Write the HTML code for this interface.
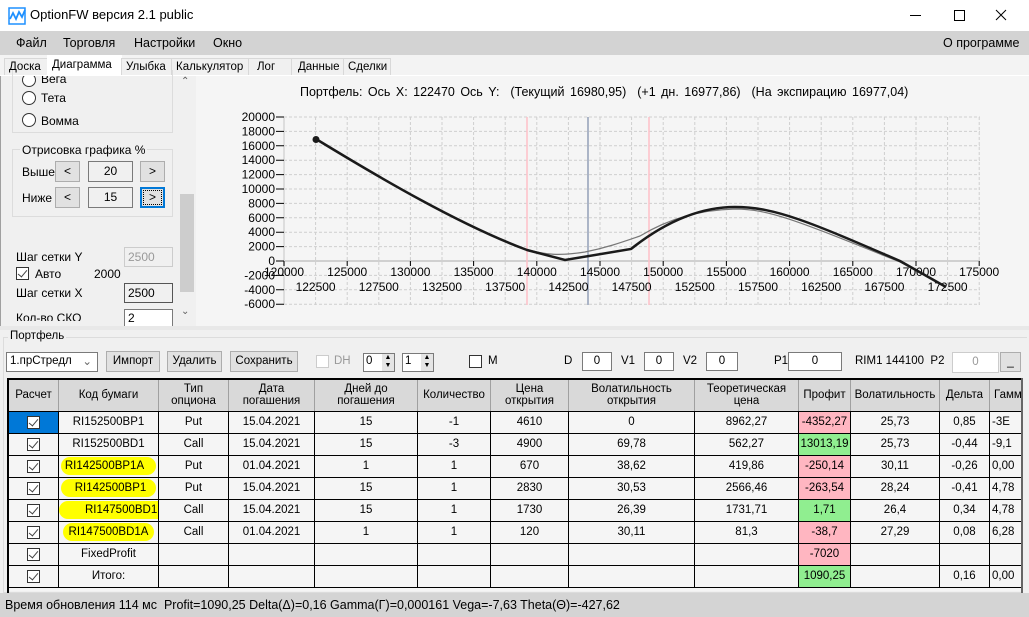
<!DOCTYPE html>
<html><head><meta charset="utf-8"><style>
*{box-sizing:border-box;margin:0;padding:0}
body{width:1029px;height:617px;overflow:hidden;position:relative;background:#f0f0f0;font-family:"Liberation Sans",sans-serif;font-size:12px;color:#000}
.a{position:absolute}
.tab{position:absolute;top:58px;height:17px;border:1px solid #d8d8d8;border-bottom:none;background:#f0f0f0;font-size:11.5px;padding:2px 0 0 4px;white-space:nowrap}
.btn{position:absolute;background:#e1e1e1;border:1px solid #adadad;text-align:center;font-size:12px}
.box{position:absolute;background:#fff;border:1px solid #7a7a7a;text-align:center;font-size:12px}
.tw{position:absolute;left:8px;top:379px;width:1013px;height:212px;overflow:hidden;background:#f5f5f5}
table{border-collapse:collapse;width:1021px;font-size:11.5px;table-layout:fixed;background:#f5f5f5}
td{border:1px solid #000;text-align:center;height:22px;padding:0;white-space:nowrap;overflow:hidden}
tr.h td{background:#d9d9d9;height:32px;line-height:12px;border-color:#fff #a0a0a0 #000 #a0a0a0;border-width:0 1px 1px 1px;border-style:solid}
.cb{display:inline-block;width:13px;height:13px;border:1px solid #333;background:#fff;position:relative;vertical-align:middle}
.cb:after{content:"";position:absolute;left:3px;top:0px;width:4px;height:8px;border:solid #444;border-width:0 1.5px 1.5px 0;transform:rotate(40deg)}
.r{background:#ffb6c1}.g{background:#90ee90}
.y{background:#ffff00;border-radius:10px}
.rad{position:absolute;width:14px;height:14px;border:1px solid #333;border-radius:50%;background:#fff}
</style></head><body>
<!-- title bar -->
<div class="a" style="left:0;top:0;width:1029px;height:31px;background:#fff"></div>
<svg class="a" style="left:8px;top:7px" width="18" height="18"><rect x="1" y="1" width="16" height="16" fill="none" stroke="#1e90ff" stroke-width="1.5"/><path d="M2 12 L5 6 L8 12 L11 5 L14 10 L17 3" fill="none" stroke="#1e90ff" stroke-width="1.8"/></svg>
<div class="a" style="left:30px;top:7px;font-size:13px">OptionFW версия 2.1 public</div>
<div class="a" style="left:910px;top:15px;width:11px;height:1px;background:#000"></div>
<div class="a" style="left:954px;top:10px;width:11px;height:11px;border:1px solid #000"></div>
<svg class="a" style="left:995px;top:9px" width="12" height="12"><path d="M1 1L11 11M11 1L1 11" stroke="#000" stroke-width="1"/></svg>
<!-- menu -->
<div class="a" style="left:0;top:31px;width:1029px;height:24px;background:#d3d3d3"></div>
<div class="a" style="left:16px;top:36px;font-size:12.5px">Файл</div>
<div class="a" style="left:63px;top:36px;font-size:12.5px">Торговля</div>
<div class="a" style="left:134px;top:36px;font-size:12.5px">Настройки</div>
<div class="a" style="left:213px;top:36px;font-size:12.5px">Окно</div>
<div class="a" style="left:943px;top:36px;font-size:12.5px">О программе</div>
<!-- tabs -->
<div class="a" style="left:0;top:55px;width:1029px;height:20px;background:#f3f3f3"></div>
<div class="tab" style="left:4px;width:44px">Доска</div>
<div class="tab" style="left:47px;top:55px;height:21px;width:75px;background:#fff;padding-top:3px;border-color:#fff">Диаграмма</div>
<div class="tab" style="left:121px;width:51px">Улыбка</div>
<div class="tab" style="left:171px;width:78px">Калькулятор</div>
<div class="tab" style="left:248px;width:44px;padding-left:8px">Лог</div>
<div class="tab" style="left:291px;width:53px;padding-left:6px">Данные</div>
<div class="tab" style="left:343px;width:48px">Сделки</div>
<div class="a" style="left:0;top:75px;width:1029px;height:1px;background:#fff"></div>
<!-- left panel -->
<div class="a" style="left:0;top:76px;width:196px;height:250px;background:#f0f0f0;border-left:1px solid #a0a0a0"></div>
<div class="a" style="left:12px;top:70px;width:161px;height:63px;border:1px solid #dcdcdc;border-top:none"></div>
<div class="rad" style="left:22px;top:73px;clip-path:inset(3px 0 0 0)"></div><div class="a" style="left:41px;top:72px;clip-path:inset(4px 0 0 0)">Вега</div>
<div class="rad" style="left:22px;top:91px"></div><div class="a" style="left:41px;top:91px">Тета</div>
<div class="rad" style="left:22px;top:113px"></div><div class="a" style="left:41px;top:114px">Вомма</div>
<div class="a" style="left:12px;top:149px;width:161px;height:68px;border:1px solid #dcdcdc"></div>
<div class="a" style="left:20px;top:143px;background:#f0f0f0;padding:0 2px">Отрисовка графика %</div>
<div class="a" style="left:22px;top:165px">Выше</div>
<div class="btn" style="left:55px;top:161px;width:25px;height:21px;line-height:18px">&lt;</div>
<div class="box" style="left:88px;top:161px;width:45px;height:21px;line-height:19px;background:#f0f0f0">20</div>
<div class="btn" style="left:140px;top:161px;width:25px;height:21px;line-height:18px">&gt;</div>
<div class="a" style="left:22px;top:191px">Ниже</div>
<div class="btn" style="left:55px;top:187px;width:25px;height:21px;line-height:18px">&lt;</div>
<div class="box" style="left:88px;top:187px;width:45px;height:21px;line-height:19px;background:#f0f0f0">15</div>
<div class="btn" style="left:140px;top:187px;width:25px;height:21px;line-height:17px;border:2px solid #0078d7;outline:1px dotted #000;outline-offset:-4px">&gt;</div>
<div class="a" style="left:16px;top:250px">Шаг сетки Y</div>
<div class="box" style="left:124px;top:247px;width:49px;height:20px;background:#f0f0f0;color:#999;border-color:#ccc;text-align:left;padding:2px 3px">2500</div>
<div class="cb" style="position:absolute;left:16px;top:267px"></div><div class="a" style="left:35px;top:267px">Авто</div>
<div class="a" style="left:94px;top:267px">2000</div>
<div class="a" style="left:16px;top:286px">Шаг сетки X</div>
<div class="box" style="left:124px;top:283px;width:49px;height:20px;background:#f0f0f0;text-align:left;padding:2px 3px;border-color:#555">2500</div>
<div class="a" style="left:16px;top:311px;height:10px;overflow:hidden">Кол-во СКО</div>
<div class="box" style="left:124px;top:309px;width:49px;height:17px;text-align:left;padding:1px 3px;overflow:hidden;border-bottom:none">2</div>
<div class="a" style="left:178px;top:76px;width:17px;height:250px;background:#f0f0f0"></div>
<div class="a" style="left:180px;top:194px;width:14px;height:98px;background:#cdcdcd"></div>
<div class="a" style="left:181px;top:76px;font-size:10px;color:#606060">&#8963;</div>
<div class="a" style="left:181px;top:306px;font-size:10px;color:#606060">&#8964;</div>
<!-- chart -->
<div class="a" style="left:196px;top:76px;width:833px;height:250px;background:#f5f5f5"></div>
<div class="a" style="left:300px;top:85px;font-size:12.5px;word-spacing:2px">Портфель: Ось X: 122470 Ось Y:&nbsp; (Текущий 16980,95)&nbsp; (+1 дн. 16977,86)&nbsp; (На экспирацию 16977,04)</div>
<svg class="a" style="left:196px;top:76px" width="833" height="250" font-family="Liberation Sans" font-size="12">
<g transform="translate(-196,-76)">
<g stroke="#cfcfcf" stroke-dasharray="3,2" stroke-width="1">
<path d="M284 117H980M284 131.4H980M284 145.8H980M284 160.2H980M284 174.6H980M284 189H980M284 203.4H980M284 217.8H980M284 232.2H980M284 246.6H980M284 275.4H980M284 289.8H980M284 304.2H980"/>
<path d="M315.6 117V305M347.2 117V305M378.8 117V305M410.4 117V305M442 117V305M473.6 117V305M505.2 117V305M536.8 117V305M568.4 117V305M600 117V305M631.6 117V305M663.2 117V305M694.8 117V305M726.4 117V305M758 117V305M789.6 117V305M821.2 117V305M852.8 117V305M884.4 117V305M916 117V305M947.6 117V305M979.2 117V305"/>
</g>
<path d="M284 261H980" stroke="#d0d0d0" stroke-width="2"/>
<path d="M284 117V305" stroke="#ddd" stroke-width="2"/>
<path d="M527 117V305M649 117V305" stroke="#ffc0c8" stroke-width="1.5"/>
<path d="M588 117V305" stroke="#7a8aa8" stroke-width="1.2"/>
<g stroke="#000"><path d="M276 117h8M276 131.4h8M276 145.8h8M276 160.2h8M276 174.6h8M276 189h8M276 203.4h8M276 217.8h8M276 232.2h8M276 246.6h8M276 261h8M276 275.4h8M276 289.8h8M276 304.2h8"/>
<path d="M284 261v5M347.2 261v5M410.4 261v5M473.6 261v5M536.8 261v5M600 261v5M663.2 261v5M726.4 261v5M789.6 261v5M852.8 261v5M916 261v5M979.2 261v5"/></g>
<g text-anchor="end"><text x="275" y="121">20000</text><text x="275" y="135.4">18000</text><text x="275" y="149.8">16000</text><text x="275" y="164.2">14000</text><text x="275" y="178.6">12000</text><text x="275" y="193">10000</text><text x="275" y="207.4">8000</text><text x="275" y="221.8">6000</text><text x="275" y="236.2">4000</text><text x="275" y="250.6">2000</text><text x="275" y="265">0</text><text x="275" y="279.4">-2000</text><text x="275" y="293.8">-4000</text><text x="275" y="308.2">-6000</text></g>
<g text-anchor="middle"><text x="284" y="276">120000</text><text x="347.2" y="276">125000</text><text x="410.4" y="276">130000</text><text x="473.6" y="276">135000</text><text x="536.8" y="276">140000</text><text x="600" y="276">145000</text><text x="663.2" y="276">150000</text><text x="726.4" y="276">155000</text><text x="789.6" y="276">160000</text><text x="852.8" y="276">165000</text><text x="916" y="276">170000</text><text x="979.2" y="276">175000</text>
<text x="315.6" y="291">122500</text><text x="378.8" y="291">127500</text><text x="442" y="291">132500</text><text x="505.2" y="291">137500</text><text x="568.4" y="291">142500</text><text x="631.6" y="291">147500</text><text x="694.8" y="291">152500</text><text x="758" y="291">157500</text><text x="821.2" y="291">162500</text><text x="884.4" y="291">167500</text><text x="947.6" y="291">172500</text></g>
<path d="M316 139 C380 178 460 225 525 249 C545 255 560 256 585 252 C605 248 620 243 640 236 C670 218 700 210 735 209 C770 209 800 222 900 262 L946 287" fill="none" stroke="#777" stroke-width="1.2"/>
<path d="M316 139 C380 178 460 225 527 250 L565 260 L631 249 C665 222 700 207 735 207 C775 207 810 222 900 261 L946 287" fill="none" stroke="#1a1a1a" stroke-width="2.5"/>
<circle cx="316" cy="139.5" r="3.5" fill="#1a1a1a"/>
</g></svg>
<!-- splitter -->
<div class="a" style="left:0;top:326px;width:1029px;height:4px;background:#e8e8e8"></div>
<!-- portfolio group -->
<div class="a" style="left:3px;top:337px;width:1024px;height:256px;border:1px solid #dcdcdc;border-right:none"></div>
<div class="a" style="left:8px;top:330px;background:#f0f0f0;padding:0 2px;font-size:11.5px">Портфель</div>
<div class="box" style="left:6px;top:352px;width:92px;height:20px;text-align:left;padding:2px 3px;font-size:11.5px">1.прСтредл<span style="position:absolute;right:5px;top:1px;color:#666">&#8964;</span></div>
<div class="btn" style="left:106px;top:351px;width:54px;height:21px;line-height:19px;font-size:11.5px">Импорт</div>
<div class="btn" style="left:167px;top:351px;width:55px;height:21px;line-height:19px;font-size:11.5px">Удалить</div>
<div class="btn" style="left:230px;top:351px;width:68px;height:21px;line-height:19px;font-size:11.5px">Сохранить</div>
<div class="a" style="left:316px;top:355px;width:13px;height:13px;border:1px solid #ccc;background:#fff"></div>
<div class="a" style="left:334px;top:355px;color:#999;font-size:11.5px">DH</div>
<div class="box" style="left:363px;top:353px;width:32px;height:19px;text-align:left;padding:1px 2px;font-size:11.5px">0</div>
<div class="a" style="left:382px;top:354px;width:12px;height:17px;background:#e5e5e5;font-size:7px;line-height:8px;text-align:center">▲<br>▼</div>
<div class="box" style="left:402px;top:353px;width:32px;height:19px;text-align:left;padding:1px 2px;font-size:11.5px">1</div>
<div class="a" style="left:421px;top:354px;width:12px;height:17px;background:#e5e5e5;font-size:7px;line-height:8px;text-align:center">▲<br>▼</div>
<div class="a" style="left:469px;top:355px;width:13px;height:13px;border:1px solid #333;background:#fff"></div>
<div class="a" style="left:488px;top:355px;font-size:11.5px">M</div>
<div class="a" style="left:564px;top:355px;font-size:11.5px">D</div>
<div class="box" style="left:582px;top:352px;width:30px;height:19px;line-height:17px;font-size:11.5px">0</div>
<div class="a" style="left:621px;top:355px;font-size:11.5px">V1</div>
<div class="box" style="left:644px;top:352px;width:30px;height:19px;line-height:17px;font-size:11.5px">0</div>
<div class="a" style="left:683px;top:355px;font-size:11.5px">V2</div>
<div class="box" style="left:706px;top:352px;width:32px;height:19px;line-height:17px;font-size:11.5px">0</div>
<div class="a" style="left:774px;top:355px;font-size:11.5px">P1</div>
<div class="box" style="left:788px;top:352px;width:54px;height:19px;line-height:17px;font-size:11.5px">0</div>
<div class="a" style="left:855px;top:355px;font-size:11.5px">RIM1 144100&nbsp; P2</div>
<div class="box" style="left:952px;top:352px;width:47px;height:21px;line-height:19px;color:#999;border-color:#ccc;font-size:11.5px">0</div>
<div class="btn" style="left:1000px;top:352px;width:21px;height:20px;line-height:16px">_</div>
<!-- table -->
<div class="tw"><table>
<colgroup><col style="width:50px"><col style="width:100px"><col style="width:70px"><col style="width:86px"><col style="width:103px"><col style="width:73px"><col style="width:78px"><col style="width:126px"><col style="width:104px"><col style="width:52px"><col style="width:89px"><col style="width:50px"><col style="width:40px"></colgroup>
<tr class="h"><td>Расчет</td><td>Код бумаги</td><td>Тип<br>опциона</td><td>Дата<br>погашения</td><td>Дней до<br>погашения</td><td>Количество</td><td>Цена<br>открытия</td><td>Волатильность<br>открытия</td><td>Теоретическая<br>цена</td><td>Профит</td><td>Волатильность</td><td>Дельта</td><td style="text-align:left;padding-left:4px">Гамма</td></tr>
<tr><td style="background:#0078d7"><span class="cb"></span></td><td>RI152500BP1</td><td>Put</td><td>15.04.2021</td><td>15</td><td>-1</td><td>4610</td><td>0</td><td>8962,27</td><td class="r">-4352,27</td><td>25,73</td><td>0,85</td><td style="text-align:left;padding-left:2px">-3E</td></tr>
<tr><td><span class="cb"></span></td><td>RI152500BD1</td><td>Call</td><td>15.04.2021</td><td>15</td><td>-3</td><td>4900</td><td>69,78</td><td>562,27</td><td class="g">13013,19</td><td>25,73</td><td>-0,44</td><td style="text-align:left;padding-left:2px">-9,1</td></tr>
<tr><td><span class="cb"></span></td><td><span class="y" style="padding:3px 12px 3px 4px">RI142500BP1A</span></td><td>Put</td><td>01.04.2021</td><td>1</td><td>1</td><td>670</td><td>38,62</td><td>419,86</td><td class="r">-250,14</td><td>30,11</td><td>-0,26</td><td style="text-align:left;padding-left:2px">0,00</td></tr>
<tr><td><span class="cb"></span></td><td><span class="y" style="padding:3px 10px 3px 14px">RI142500BP1</span></td><td>Put</td><td>15.04.2021</td><td>15</td><td>1</td><td>2830</td><td>30,53</td><td>2566,46</td><td class="r">-263,54</td><td>28,24</td><td>-0,41</td><td style="text-align:left;padding-left:2px">4,78</td></tr>
<tr><td><span class="cb"></span></td><td><span class="y" style="padding:3px 10px 3px 26px">RI147500BD1</span></td><td>Call</td><td>15.04.2021</td><td>15</td><td>1</td><td>1730</td><td>26,39</td><td>1731,71</td><td class="g">1,71</td><td>26,4</td><td>0,34</td><td style="text-align:left;padding-left:2px">4,78</td></tr>
<tr><td><span class="cb"></span></td><td><span class="y" style="padding:3px 6px">RI147500BD1A</span></td><td>Call</td><td>01.04.2021</td><td>1</td><td>1</td><td>120</td><td>30,11</td><td>81,3</td><td class="r">-38,7</td><td>27,29</td><td>0,08</td><td style="text-align:left;padding-left:2px">6,28</td></tr>
<tr><td><span class="cb"></span></td><td>FixedProfit</td><td></td><td></td><td></td><td></td><td></td><td></td><td></td><td class="r">-7020</td><td></td><td></td><td></td></tr>
<tr><td><span class="cb"></span></td><td>Итого:</td><td></td><td></td><td></td><td></td><td></td><td></td><td></td><td class="g">1090,25</td><td></td><td>0,16</td><td style="text-align:left;padding-left:2px">0,00</td></tr>
</table></div>
<div class="a" style="left:7px;top:378px;width:2px;height:215px;background:#000"></div>
<div class="a" style="left:7px;top:378px;width:1016px;height:2px;background:#000"></div>
<div class="a" style="left:1021px;top:378px;width:8px;height:215px;background:#f0f0f0;border-left:2px solid #666"></div>
<!-- status -->
<div class="a" style="left:0;top:593px;width:1029px;height:24px;background:#d4d4d4"></div>
<div class="a" style="left:5px;top:598px;font-size:12.5px">Время обновления 114 мс&nbsp; Profit=1090,25 Delta(Δ)=0,16 Gamma(Γ)=0,000161 Vega=-7,63 Theta(Θ)=-427,62</div>
</body></html>
